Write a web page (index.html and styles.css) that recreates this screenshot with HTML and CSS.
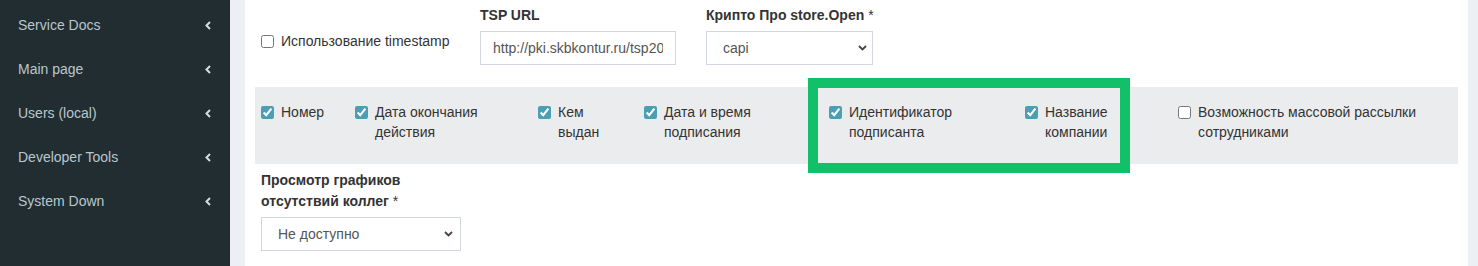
FILE: index.html
```html
<!DOCTYPE html>
<html lang="ru">
<head>
    <meta charset="UTF-8">
    <meta name="viewport" content="width=device-width, initial-scale=1.0">
    <title>Settings</title>
    <link rel="stylesheet" href="styles.css">
</head>
<body>
    <aside class="sidebar">
        <ul class="menu">
            <li><span>Service Docs</span><svg class="angle" width="6" height="9" viewBox="0 0 6 9"><path d="M5 1L1.5 4.5L5 8" fill="none" stroke="#d4dde2" stroke-width="2"/></svg></li>
            <li><span>Main page</span><svg class="angle" width="6" height="9" viewBox="0 0 6 9"><path d="M5 1L1.5 4.5L5 8" fill="none" stroke="#d4dde2" stroke-width="2"/></svg></li>
            <li><span>Users (local)</span><svg class="angle" width="6" height="9" viewBox="0 0 6 9"><path d="M5 1L1.5 4.5L5 8" fill="none" stroke="#d4dde2" stroke-width="2"/></svg></li>
            <li><span>Developer Tools</span><svg class="angle" width="6" height="9" viewBox="0 0 6 9"><path d="M5 1L1.5 4.5L5 8" fill="none" stroke="#d4dde2" stroke-width="2"/></svg></li>
            <li><span>System Down</span><svg class="angle" width="6" height="9" viewBox="0 0 6 9"><path d="M5 1L1.5 4.5L5 8" fill="none" stroke="#d4dde2" stroke-width="2"/></svg></li>
        </ul>
    </aside>

    <main class="content">
        <div class="box">
            <div class="top-row">
                <div class="col-ts">
                    <label class="check"><input type="checkbox"><span>Использование timestamp</span></label>
                </div>
                <div class="col-tsp">
                    <div class="field-label">TSP URL</div>
                    <input class="text-input" type="text" value="http://pki.skbkontur.ru/tsp2012/tsp.srf">
                </div>
                <div class="col-crypto">
                    <div class="field-label">Крипто Про store.Open <span class="req">*</span></div>
                    <div class="select-wrap crypto">
                        <select><option>capi</option></select>
                        <svg class="caret" width="9" height="6" viewBox="0 0 9 6"><path d="M1 1L4.5 4.5L8 1" fill="none" stroke="#444" stroke-width="1.8"/></svg>
                    </div>
                </div>
            </div>

            <div class="fields-row">
                <label class="check"><input type="checkbox" checked><span>Номер</span></label>
                <label class="check"><input type="checkbox" checked><span>Дата окончания<br>действия</span></label>
                <label class="check"><input type="checkbox" checked><span>Кем<br>выдан</span></label>
                <label class="check"><input type="checkbox" checked><span>Дата и время<br>подписания</span></label>
                <label class="check"><input type="checkbox" checked><span>Идентификатор<br>подписанта</span></label>
                <label class="check"><input type="checkbox" checked><span>Название<br>компании</span></label>
                <label class="check"><input type="checkbox"><span>Возможность массовой рассылки<br>сотрудниками</span></label>
            </div>

            <div class="absence">
                <div class="field-label tall">Просмотр графиков<br>отсутствий коллег <span class="req">*</span></div>
                <div class="select-wrap absence-select">
                    <select><option>Не доступно</option></select>
                    <svg class="caret" width="9" height="6" viewBox="0 0 9 6"><path d="M1 1L4.5 4.5L8 1" fill="none" stroke="#444" stroke-width="1.8"/></svg>
                </div>
            </div>
        </div>
    </main>

    <div class="highlight"></div>
</body>
</html>
```

FILE: styles.css
```css
body {
    margin: 0;
    display: flex;
    height: 266px;
    overflow: hidden;
    font-family: "Liberation Sans", Arial, sans-serif;
    font-size: 14px;
    color: #333;
    background-color: #ecf0f5;
}
.sidebar {
    width: 230px;
    flex-shrink: 0;
    background-color: #222d32;
}
.menu {
    list-style: none;
    margin: 0;
    padding: 3px 0 0;
}
.menu li {
    display: flex;
    align-items: center;
    justify-content: space-between;
    padding: 12px 19px 12px 18px;
    line-height: 20px;
    color: #b8c7ce;
}
.content {
    flex: 1;
    padding: 0 10px 0 15px;
}
.box {
    background: #fff;
    height: 266px;
    padding: 0 10px;
}
.top-row {
    display: flex;
    padding: 5px 0 22px;
}
.col-ts {
    width: 219px;
    padding: 26px 0 0 6px;
}
.col-tsp {
    width: 226px;
}
.field-label {
    font-weight: bold;
    line-height: 20px;
    margin-bottom: 6px;
}
.field-label .req {
    font-weight: normal;
}
.check {
    display: flex;
    align-items: flex-start;
    line-height: 20px;
}
.check input {
    width: 13px;
    height: 13px;
    margin: 4px 7px 0 0;
    accent-color: #4a9fb4;
    flex-shrink: 0;
}
.text-input {
    width: 196px;
    height: 34px;
    box-sizing: border-box;
    border: 1px solid #d2d6de;
    padding: 0 12px;
    font-family: inherit;
    font-size: 14px;
    color: #555;
    outline: none;
}
.select-wrap {
    position: relative;
}
.select-wrap select {
    appearance: none;
    width: 100%;
    height: 34px;
    box-sizing: border-box;
    border: 1px solid #d2d6de;
    border-radius: 0;
    background: #fff;
    padding: 0 16px;
    font-family: inherit;
    font-size: 14px;
    color: #555;
}
.select-wrap .caret {
    position: absolute;
    right: 6px;
    top: 14px;
}
.crypto {
    width: 167px;
    margin-top: 1px;
}
.fields-row {
    display: grid;
    grid-template-columns: 94px 183px 106px 185px 196px 153px 1fr;
    background-color: #ebecee;
    padding: 15px 0 22px 6px;
}
.absence {
    padding: 6px 0 0 6px;
}
.field-label.tall {
    line-height: 21px;
    margin-bottom: 5px;
}
.absence-select {
    width: 200px;
}
.absence-select .caret {
    right: 8px;
}
.highlight {
    position: absolute;
    left: 808px;
    top: 78px;
    width: 302px;
    height: 75px;
    border: 10px solid #13c06a;
}
```
